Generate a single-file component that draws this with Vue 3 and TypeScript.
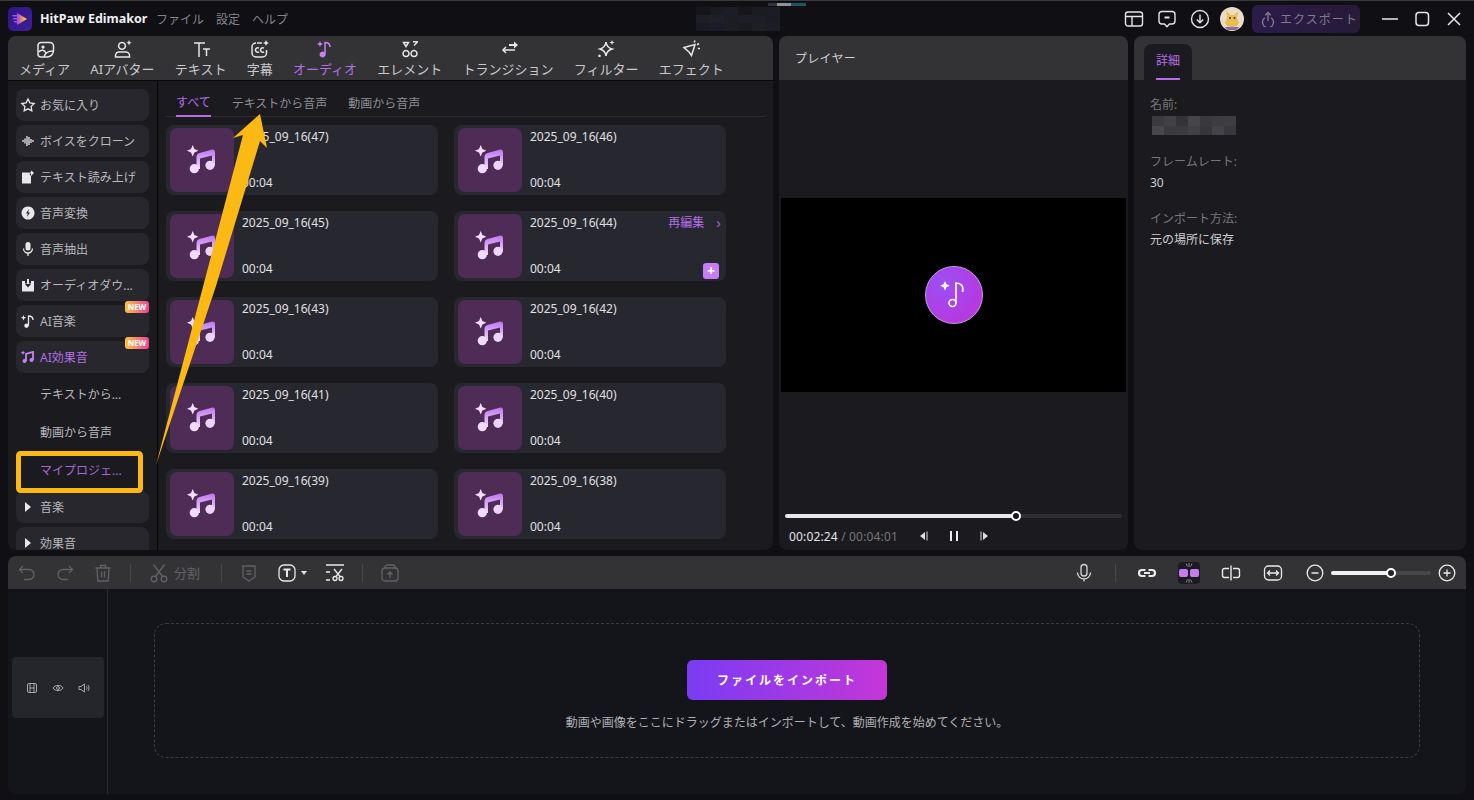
<script setup lang="ts">
interface Ico { s?: string[]; f?: string[] }
const tabs: { label: string; active?: boolean; icon: Ico }[] = [
  { label: 'メディア', icon: { s: ['M6 3.5h9a3.5 3.5 0 0 1 3.5 3.5v4.5a6.5 6.5 0 0 1-6.5 6.5H6A3 3 0 0 1 3 15V6.5a3 3 0 0 1 3-3z', 'M3.5 13c3-3 6-2 7.500 1', 'M9 18c1-4 4-6 9-6'], f: ['M8 6.500a1.600 1.600 0 1 0 .01 0z'] } },
  { label: 'AIアバター', icon: { s: ['M10 3.500a3.400 3.400 0 1 0 .01 0z', 'M3.500 18v-1.500a3.500 3.500 0 0 1 3.500-3.500h7a3.500 3.500 0 0 1 3.500 3.500V18z'], f: ['M17 1l.8 2 2 .8-2 .8-.8 2-.8-2-2-.8 2-.8z'] } },
  { label: 'テキスト', icon: { s: ['M3 4h11', 'M8 4v14', 'M12 10h7', 'M15.500 10v7'] } },
  { label: '字幕', icon: { s: ['M7 4h5M16.500 11v3a4 4 0 0 1-4 4H6a4 4 0 0 1-4-4V8a4 4 0 0 1 4-4', 'M9 9.200a2.200 2.200 0 1 0 0 3.600', 'M14 9.200a2.200 2.200 0 1 0 0 3.600'], f: ['M16 1l.9 2.100 2.100.9-2.100.9-.9 2.100-.9-2.100-2.100-.9 2.100-.9z'] } },
  { label: 'オーディオ', active: true, icon: { s: ['M10 15V3.500c3 0 5 1.500 5 4.500'], f: ['M7.600 12.500a3 3 0 1 0 .01 0z M5 2l.9 2.100L8 5l-2.100.9L5 8l-.9-2.100L2 5l2.100-.9z'] } },
  { label: 'エレメント', icon: { s: ['M6 11.500a3 3 0 1 0 .01 0z', 'M14 11.500a3 3 0 1 0 .01 0z', 'M3.500 3.500h5l-2.500 4z'], f: ['M13 2h5v1.500l-3.500 3.500-1-1L16 3.500h-3z'] } },
  { label: 'トランジション', icon: { s: ['M17 11H5', 'M8 8l-3 3 3 3'], f: ['M11 5h5V2.500L20 6l-4 3.500V7h-5z'] } },
  { label: 'フィルター', icon: { s: ['M10 3c.5 4 2.500 6 6 7-3.500 1-5.500 3-6 7-.5-4-2.500-6-6-7 3.500-1 5.500-3 6-7z'], f: ['M16 1l.7 1.800 1.800.7-1.800.7-.7 1.800-.7-1.800-1.800-.7 1.800-.7z M3.500 15.500a1.300 1.300 0 1 0 .01 0z'] } },
  { label: 'エフェクト', icon: { s: ['M3 8.500l11-3-3.500 11-2.500-3.500z', 'M14 1.500l-.8 2M18 4.500l-2 1.300M19 9.500h-2.200'] } },
]
const side: { label: string; icon?: Ico; isNew?: boolean; active?: boolean; arrow?: boolean; sub?: boolean; subActive?: boolean }[] = [
  { label: 'お気に入り', icon: { s: ['M8 2l1.900 3.900 4.300.6-3.100 3 .7 4.300L8 11.800l-3.800 2 .7-4.300-3.100-3 4.300-.6z'] } },
  { label: 'ボイスをクローン', icon: { s: ['M3 7v2M5 5.500v5M7 3v10M9 4v8M11 6v4M13 7v2'] } },
  { label: 'テキスト読み上げ', icon: { f: ['M2 3.500h7.500L11 5v9.500H2z M11.500 1.500l2.500 2.500-3 3-1.500-2z'], s: [] } },
  { label: '音声変換', icon: { f: ['M8 1.500a6.500 6.500 0 1 0 .01 0z M8.800 4L6 8.500h1.800L7 12l3-4.500H8.200z'] } },
  { label: '音声抽出', icon: { s: ['M3.500 7.500a4.500 4.500 0 0 0 9 0', 'M8 12v3'], f: ['M8 1a2.500 2.500 0 0 1 2.500 2.500V7a2.500 2.500 0 0 1-5 0V3.500A2.500 2.500 0 0 1 8 1z'] } },
  { label: 'オーディオダウ...', icon: { f: ['M2 4h3v2.500h2V2h2v4.500h2V4h3v10.500H2z M8 10.500L5 7h6z'] } },
  { label: 'AI音楽', isNew: true, icon: { s: ['M8.500 12.500V3c2.500 0 4.500 1 4.500 4'], f: ['M6.500 10.500a2.200 2.200 0 1 0 .01 0z M3.500 2l.8 1.900 1.900.8-1.900.8-.8 1.900-.8-1.900L.8 4.700l1.900-.8z'] } },
  { label: 'AI効果音', isNew: true, active: true, icon: { s: ['M6 12V5l7-2v8'], f: ['M4.500 10a2 2 0 1 0 .01 0z M11.500 9a2 2 0 1 0 .01 0z M3 1.500l.7 1.600 1.600.7-1.600.7-.7 1.600-.7-1.600-1.600-.7 1.600-.7z'] } },
  { label: 'テキストから...', sub: true },
  { label: '動画から音声', sub: true },
  { label: 'マイプロジェ...', sub: true, subActive: true },
  { label: '音楽', arrow: true },
  { label: '効果音', arrow: true },
]
const cards = [47, 46, 45, 44, 43, 42, 41, 40, 39, 38].map((n) => ({ n, name: `2025_09_16(${n})`, hover: n === 44 }))
const topTiles = ['#15151c','#1a1a22','#1d1d25','#16161c','#1b1b22','#1c1c28','#1e1e26','#1f1f27','#1c1c24','#1e1e26','#1d1d24','#1b1b23','#1a1a24','#1b1b2a','#1d1d24','#1a1a20','#1e1e26','#1d1d25']
const nameTiles = ['#3a3a3f','#404045','#333338','#45454a','#38383d','#3c3c41','#3d3d42','#47474c','#3a3a3f','#3b3b40','#404045','#36363b','#43434a','#37373c']
</script>

<template>
  <div class="app">
    <header class="titlebar">
      <div class="logo">
        <svg viewBox="0 0 24 24" width="24" height="24">
          <defs>
            <linearGradient id="lg" x1="0" y1="0" x2="1" y2="0"><stop offset="0" stop-color="#b04be8" /><stop offset=".6" stop-color="#f0a040" /><stop offset="1" stop-color="#f8dc60" /></linearGradient>
          </defs>
          <path d="M9 6l10 6-10 6z" fill="url(#lg)" />
          <path d="M4 8h7v1.500H5zM5 11h7v1.500H5.500zM5.500 14h6v1.500H6.500z" fill="#a050f0" />
        </svg>
      </div>
      <span class="brand">HitPaw Edimakor</span>
      <nav class="menu"><span>ファイル</span><span>設定</span><span>ヘルプ</span></nav>
      <div class="top-mosaic"><i v-for="(c, i) in topTiles" :key="i" :style="{ background: c }"></i></div>
      <div class="top-right">
        <svg class="ti" viewBox="0 0 20 20"><rect x="1.500" y="3" width="17" height="14" rx="2.500" /><path d="M1.500 7.500h17M8 7.500V17" /></svg>
        <svg class="ti" viewBox="0 0 20 20"><path d="M5 2.500h10a3 3 0 0 1 3 3V12a3 3 0 0 1-3 3h-2.500L10 17.800 7.500 15H5a3 3 0 0 1-3-3V5.500a3 3 0 0 1 3-3z" /><path d="M7.500 8.500h5" stroke-width="2" /></svg>
        <svg class="ti" viewBox="0 0 20 20"><circle cx="10" cy="10" r="8.500" /><path d="M10 5.500v8M6.800 10.500l3.200 3.200 3.200-3.200" /></svg>
        <svg class="avatar" viewBox="0 0 24 24"><circle cx="12" cy="12" r="12" fill="#eadcc8" /><path d="M6 3l4 5h4l4-4-1 7 2 5-3 4H8l-3-4 2-5z" fill="#e8bf50" /><circle cx="10" cy="11" r="1" fill="#4a3520" /><circle cx="14.500" cy="11" r="1" fill="#4a3520" /><path d="M5 20h14l-2 3H7z" fill="#8a6fa8" /></svg>
        <button class="export">
          <svg viewBox="0 0 16 16" width="16" height="16"><path d="M8 10V1.500M5.200 4.300L8 1.500l2.800 2.800M4.800 6.800a5.500 5.500 0 1 0 6.400 0" fill="none" stroke="#7f7b8a" stroke-width="1.400" /></svg>
          <span>エクスポート</span>
        </button>
        <div class="winctl">
          <svg viewBox="0 0 16 16"><path d="M0 8h16" /></svg>
          <svg viewBox="0 0 16 16"><rect x="2" y="1.500" width="12.500" height="13" rx="3" /></svg>
          <svg viewBox="0 0 16 16"><path d="M2 2l12 12M14 2L2 14" /></svg>
        </div>
      </div>
    </header>

    <div class="upper">
      <section class="panel media">
        <div class="tabs">
          <div v-for="t in tabs" :key="t.label" class="tab" :class="{ on: t.active }">
            <svg viewBox="0 0 20 20" width="20" height="20">
              <path v-for="(d, i) in t.icon.s" :key="i" :d="d" class="st" />
              <path v-for="(d, i) in t.icon.f" :key="'f' + i" :d="d" class="fl" />
            </svg>
            <span>{{ t.label }}</span>
          </div>
        </div>
        <div class="media-body">
          <aside class="side">
            <div v-for="s in side" :key="s.label" class="side-item" :class="{ sub: s.sub, subon: s.subActive, on: s.active }">
              <svg v-if="s.icon" viewBox="0 0 16 16" width="16" height="16">
                <path v-for="(d, i) in s.icon.s" :key="i" :d="d" class="st" />
                <path v-for="(d, i) in s.icon.f" :key="'f' + i" :d="d" class="fl" fill-rule="evenodd" />
              </svg>
              <svg v-if="s.arrow" viewBox="0 0 16 16" width="16" height="16"><path d="M5 3l6 5-6 5z" class="fl" /></svg>
              <span>{{ s.label }}</span>
              <em v-if="s.isNew" class="new">NEW</em>
            </div>
          </aside>
          <div class="content">
            <div class="subtabs"><span class="on">すべて</span><span>テキストから音声</span><span>動画から音声</span></div>
            <div class="grid">
              <article v-for="c in cards" :key="c.n" class="card">
                <div class="thumb">
                  <svg viewBox="0 0 32 32" width="32" height="32">
                    <defs><linearGradient :id="'n' + c.n" x1="0" y1="0" x2="0" y2="1"><stop offset="0" stop-color="#bf76ee" /><stop offset="1" stop-color="#f0dcff" /></linearGradient></defs>
                    <path d="M10.500 25V13Q10.500 10 13.500 9L25.500 5.700Q29 5 29 8.500V21.500H26V11.500L14 14.500V25z" :fill="`url(#n${c.n})`" />
                    <circle cx="8.300" cy="24.700" r="4.600" fill="#f0dcff" />
                    <circle cx="24" cy="21.300" r="4.600" fill="#edd4fc" />
                    <path d="M6.700 1l1.700 4 4 1.700-4 1.700-1.700 4-1.700-4-4-1.700 4-1.700z" fill="#f3dcff" />
                  </svg>
                </div>
                <div class="info">
                  <div class="row"><span>{{ c.name }}</span><span v-if="c.hover" class="reedit">再編集<b>›</b></span></div>
                  <div class="row"><span>00:04</span><span v-if="c.hover" class="plus">+</span></div>
                </div>
              </article>
            </div>
          </div>
        </div>
      </section>

      <section class="panel player">
        <div class="head"><span class="head-title">プレイヤー</span></div>
        <div class="stage">
          <div class="video">
            <div class="disc">
              <svg viewBox="0 0 40 40" width="40" height="40">
                <path d="M11 6l1.500 3.300 3.300 1.500-3.300 1.500L11 15.600l-1.500-3.300-3.300-1.500 3.300-1.500z" fill="#fff" />
                <path d="M22 28V8c5 0 8 3 6.500 9" fill="none" stroke="#fff" stroke-width="1.600" />
                <circle cx="18.500" cy="28" r="3.500" fill="none" stroke="#fff" stroke-width="1.600" />
              </svg>
            </div>
          </div>
        </div>
        <div class="progress"><div class="fill"><i></i></div></div>
        <div class="controls">
          <span class="time"><b>00:02:24</b> / 00:04:01</span>
          <div class="pbtns">
            <svg viewBox="0 0 12 12" width="12" height="12"><path d="M7 2v8L2 6z" fill="#ddd" /><path d="M9 1.500v9" stroke="#ddd" stroke-width="1" /></svg>
            <svg viewBox="0 0 12 12" width="12" height="12"><path d="M3 1v10M9 1v10" stroke="#eee" stroke-width="2" /></svg>
            <svg viewBox="0 0 12 12" width="12" height="12"><path d="M5 2v8l5-4z" fill="#ddd" /><path d="M3 1.500v9" stroke="#ddd" stroke-width="1" /></svg>
          </div>
        </div>
      </section>

      <section class="panel detail">
        <div class="head detail-head"><div class="dtab"><span>詳細</span></div></div>
        <dl class="dl">
          <dt>名前:</dt>
          <dd class="mos"><i v-for="(c, i) in nameTiles" :key="i" :style="{ background: c }"></i></dd>
          <dt>フレームレート:</dt>
          <dd>30</dd>
          <dt>インポート方法:</dt>
          <dd>元の場所に保存</dd>
        </dl>
      </section>
    </div>

    <section class="panel lower">
      <div class="toolbar">
        <div class="tools">
          <svg class="tl dim" viewBox="0 0 20 20"><path d="M6 3L2.500 6.500 6 10" /><path d="M2.500 6.500H12a5 5 0 0 1 0 10H7" /></svg>
          <svg class="tl dim g18" viewBox="0 0 20 20"><path d="M14 3l3.500 3.500L14 10" /><path d="M17.500 6.500H8a5 5 0 0 0 0 10h5" /></svg>
          <svg class="tl dim g18" viewBox="0 0 20 20"><path d="M2.500 5h15M7.500 5V2.500h5V5M4 5l.8 13h10.400L16 5M8.500 8.500v6M11.500 8.500v6" /></svg>
          <i class="sep s1"></i>
          <svg class="tl dim g18" viewBox="0 0 20 20"><circle cx="5" cy="16" r="2.800" /><circle cx="15" cy="16" r="2.800" /><path d="M6.500 13.500L15.500 1.500M13.500 13.500L4.500 1.500" /></svg>
          <span class="split">分割</span>
          <i class="sep s2"></i>
          <svg class="tl dim nar" viewBox="0 0 20 20"><path d="M4 3h12v11l-6 4-6-4z" /><path d="M7.500 8h5M7.500 11h5" /></svg>
          <svg class="tl wh t-t" viewBox="0 0 20 20"><rect x="2" y="2" width="16" height="16" rx="5" /><path d="M6.500 6.500h7M10 6.500V14" stroke-width="2" /></svg>
          <svg class="caret" viewBox="0 0 8 8" width="8" height="8"><path d="M1 2h6L4 6z" fill="#ddd" /></svg>
          <svg class="tl wh t-s" viewBox="0 0 20 20"><path d="M1 2h18M1 9h4M1 17h4" /><circle cx="10" cy="15.500" r="2" /><circle cx="16" cy="15.500" r="2" /><path d="M11 13.500L17 6M15 13.500L9 6" /></svg>
          <i class="sep s3"></i>
          <svg class="tl dim t-u" viewBox="0 0 20 20"><rect x="2" y="5" width="16" height="13" rx="3" /><path d="M5 5V4a2 2 0 0 1 2-2h6a2 2 0 0 1 2 2v1M10 15V9M7.500 11.500L10 9l2.500 2.500" /></svg>
        </div>
        <div class="tools right">
          <svg class="tl wh mic" viewBox="0 0 20 20"><path d="M10 1.500a3 3 0 0 1 3 3V10a3 3 0 0 1-6 0V4.500a3 3 0 0 1 3-3z" /><path d="M3.500 9.500a6.500 6.500 0 0 0 13 0M10 16v2.500" /></svg>
          <i class="sep s4"></i>
          <svg class="tl wh s5" viewBox="0 0 20 20"><path d="M8.500 7H5a3 3 0 0 0 0 6h3.500M11.500 7H15a3 3 0 0 1 0 6h-3.500M7 10h6" stroke-width="2.200" /></svg>
          <div class="activebox">
            <svg viewBox="0 0 22 22" width="22" height="22"><rect x="1" y="7" width="9" height="8" rx="2" fill="#c77cf2" /><rect x="12" y="7" width="9" height="8" rx="2" fill="#c77cf2" /><path d="M8 1.500l1.500 3M14 1.500l-1.500 3M8 20.500l1.500-3M14 20.500l-1.500-3M11 1v4M11 17v4" stroke="#8a7a98" stroke-width="1" fill="none" /></svg>
          </div>
          <svg class="tl wh s6" viewBox="0 0 20 20"><path d="M8 5.500H3.500a2 2 0 0 0-2 2v5a2 2 0 0 0 2 2H8M12 5.500h4.500a2 2 0 0 1 2 2v5a2 2 0 0 1-2 2H12M10 2.500v15" stroke-width="1.400" /></svg>
          <svg class="tl wh s7" viewBox="0 0 20 20"><rect x="1.500" y="3" width="17" height="14" rx="4" /><path d="M4.500 10h11M7 7.500L4.500 10 7 12.500M13 7.500l2.500 2.500-2.500 2.500" /></svg>
          <svg class="tl wh s8" viewBox="0 0 20 20"><circle cx="10" cy="10" r="7.800" /><path d="M6.500 10h7" /></svg>
          <div class="zoom"><div class="zfill"><i></i></div></div>
          <svg class="tl wh s9" viewBox="0 0 20 20"><circle cx="10" cy="10" r="7.800" /><path d="M6.500 10h7M10 6.500v7" /></svg>
        </div>
      </div>
      <div class="timeline">
        <div class="track-col">
          <div class="track-head">
            <svg viewBox="0 0 12 12" width="12" height="12"><rect x="1.500" y="1.500" width="9" height="9" rx="1.500" /><path d="M4 1.500v9M8 1.500v9M4 6h4" /></svg>
            <svg viewBox="0 0 12 12" width="12" height="12"><path d="M1 6c2-3.500 8-3.500 10 0-2 3.500-8 3.500-10 0z" /><circle cx="6" cy="6" r="1.500" /></svg>
            <svg viewBox="0 0 12 12" width="12" height="12"><path d="M1 4.500v3h2L6.500 10V2L3 4.500zM8.500 4.500c.7 1 .7 2 0 3M10 3c1.300 2 1.300 4 0 6" /></svg>
          </div>
        </div>
        <div class="drop">
          <button class="import">ファイルをインポート</button>
          <p>動画や画像をここにドラッグまたはインポートして、動画作成を始めてください。</p>
        </div>
      </div>
    </section>

    <i class="strip"></i>
    <svg class="overlay" viewBox="0 0 1474 800" width="1474" height="800">
      <rect x="18.500" y="453.500" width="122" height="37" rx="2" fill="none" stroke="#fdb913" stroke-width="5" />
      <path d="M260 114L267 148L260 141L216 286L156 465L243 135L233 138z" fill="#fdb913" />
    </svg>
  </div>
</template>

<style>
html, body { margin: 0; background: #0f0f14; }
</style>

<style scoped>
* { box-sizing: border-box; }
.app {
  position: relative; width: 1474px; height: 800px; overflow: hidden; background: #0f0f14;
  border-top: 1px solid #3a3a3e;
  font-family: "Noto Sans", "Noto Sans CJK JP", sans-serif; font-size: 12px; color: #cfcfd2;
}
.strip { position: absolute; left: 768px; top: 2px; width: 38px; height: 3px; background: linear-gradient(90deg, #33333a 0 25%, #8e9297 25% 60%, #1f5560 60%); }
.titlebar { height: 35px; display: flex; align-items: center; padding-left: 8px; }
.logo { width: 24px; height: 24px; border-radius: 5px; background: linear-gradient(135deg, #2d1680, #3f1f9c); display: flex; }
.brand { margin-left: 8px; font-size: 12.500px; font-weight: 700; color: #f0f0f2; white-space: nowrap; width: 108px; }
.menu { display: flex; gap: 12px; color: #85858b; margin-left: 8px; width: 132px; }
.top-mosaic { margin-left: 408px; width: 84px; height: 24px; display: grid; grid-template-columns: repeat(6, 1fr); }
.top-right { margin-left: auto; display: flex; align-items: center; }
.ti { width: 20px; height: 20px; fill: none; stroke: #e4e4e6; stroke-width: 1.400; margin-right: 13px; }
.avatar { width: 24px; height: 24px; margin-left: -3px; }
.export {
  margin-left: 8px; width: 108px; height: 28px; border: 0; border-radius: 6px; background: linear-gradient(90deg, #2b1b4a, #281a38);
  color: #7f7b8a; font: inherit; display: flex; align-items: center; gap: 3px; padding: 0 0 0 8px;
}
.export span { letter-spacing: 1px; margin-left: 1px; white-space: nowrap; }
.winctl { display: flex; gap: 16px; margin: 0 12px 0 22px; }
.winctl svg { width: 16px; height: 16px; fill: none; stroke: #e8e8ea; stroke-width: 1.500; }

.upper { display: flex; gap: 6px; padding: 0 8px; height: 514px; }
.panel { background: #1a1a1f; border-radius: 8px; overflow: hidden; }
.media { width: 765px; display: flex; flex-direction: column; }
.tabs { height: 45px; background: #333336; border-bottom: 1px solid #08080a; display: flex; gap: 20.250px; padding-left: 11px; flex: none; }
.tab { display: flex; flex-direction: column; align-items: center; color: #c9c9cb; font-size: 13px; line-height: 18px; padding-top: 3px; white-space: nowrap; }
.tab svg { height: 20px; margin-bottom: 1px; }
.tab .st { fill: none; stroke: #e6e6e8; stroke-width: 1.500; }
.tab .fl { fill: #e6e6e8; }
.tab.on { color: #b56ee8; }
.tab.on .st { stroke: #c783f2; }
.tab.on .fl { fill: #c783f2; }
.media-body { flex: 1; display: flex; min-height: 0; }
.side { width: 150px; flex: none; border-right: 1px solid #050507; padding: 8px 8px 0; display: flex; flex-direction: column; gap: 4px; overflow: hidden; }
.side-item { position: relative; flex: none; width: 133px; height: 32px; border-radius: 8px; background: #27272d; display: flex; align-items: center; padding-left: 4px; gap: 4px; color: #b9b9bc; white-space: nowrap; }
.side-item .st { fill: none; stroke: #e8e8ea; stroke-width: 1.300; }
.side-item .fl { fill: #e8e8ea; }
.side-item.on { color: #b56ee8; }
.side-item.on .st { stroke: #c783f2; stroke-width: 1.800; }
.side-item.on .fl { fill: #c783f2; }
.sub { height: 34px; background: none; padding-left: 24px; }
.subon { color: #a56ad8; }
.new {
  position: absolute; right: 0; top: -4px; width: 24px; height: 12px; border-radius: 3px; background: linear-gradient(90deg, #f8c83c, #f0409c);
  font: 700 8px/12px "Noto Sans", sans-serif; color: #fff; text-align: center;
}
.content { flex: 1; padding: 0 8px; min-width: 0; }
.subtabs { height: 36px; display: flex; gap: 21px; padding-left: 10px; border-bottom: 1px solid #2c2c31; color: #8e8e93; }
.subtabs span { height: 36px; line-height: 34px; padding-top: 6px; white-space: nowrap; }
.subtabs .on { color: #b56ee8; border-bottom: 2px solid #b56ee8; line-height: 32px; }
.grid { display: grid; grid-template-columns: 272px 272px; column-gap: 16px; row-gap: 16px; padding-top: 8px; }
.card { height: 70px; background: #27272f; border-radius: 8px; padding: 3px 4px; display: flex; gap: 8px; }
.thumb { width: 64px; height: 64px; flex: none; background: #4e2c56; border-radius: 7px; display: flex; align-items: center; justify-content: center; }
.info { flex: 1; display: flex; flex-direction: column; justify-content: space-between; color: #e0e0e2; line-height: 17px; padding: 0 4px 1px 0; }
.row { display: flex; justify-content: space-between; align-items: center; height: 17px; }
.reedit { color: #b56ee8; display: flex; gap: 12px; margin-right: -3px; }
.reedit b { font-weight: 400; font-size: 15px; color: #a060d0; }
.plus { width: 16px; height: 16px; border-radius: 3px; background: #c87cf6; color: #fff; font-weight: 700; line-height: 16px; text-align: center; margin: 2px -1px -2px 0; font-size: 14px; }

.player { width: 349px; display: flex; flex-direction: column; }
.head { height: 44px; flex: none; background: #333336; }
.head-title { display: block; padding: 13px 0 0 16px; color: #d0d0d2; letter-spacing: .3px; line-height: 20px; }
.stage { flex: 1; display: flex; align-items: center; padding: 0 2px; }
.video { width: 345px; height: 194px; margin-top: -4px; background: #000; display: flex; align-items: center; justify-content: center; }
.disc { width: 58px; height: 58px; border-radius: 50%; background: radial-gradient(circle at 30% 30%, #9a50f5, #b53ae0 70%); border: 1px solid #c99af0; display: flex; align-items: center; justify-content: center; }
.progress { height: 4px; margin: 0 6px; border-radius: 2px; background: #2e2e33; flex: none; }
.fill { position: relative; width: 232px; height: 4px; background: #e8e8ea; border-radius: 2px; }
.fill i { position: absolute; right: -4px; top: -3px; width: 10px; height: 10px; border-radius: 50%; background: #1a1a1f; border: 2px solid #fff; }
.controls { height: 36px; flex: none; display: flex; align-items: center; padding: 0 0 0 10px; margin-bottom: -4px; color: #77777c; }
.time { width: 129px; white-space: nowrap; letter-spacing: .16px; }
.time b { font-weight: 400; color: #e4e4e6; }
.pbtns { display: flex; gap: 18px; }

.detail { flex: 1; }
.detail-head { padding: 8px 0 0 10px; }
.dtab { width: 48px; height: 36px; background: #1a1a1f; border-radius: 8px 8px 0 0; display: flex; justify-content: center; color: #b56ee8; }
.dtab span { width: 24px; height: 36px; line-height: 34px; border-bottom: 2px solid #b56ee8; }
.dl { margin: 0; padding: 15px 0 0 16px; line-height: 20px; }
dt { color: #77777c; }
dd { height: 20px; color: #cfcfd2; margin: 1px 0 16px; }
dd.mos { width: 84px; height: 19px; margin: 1px 0 17px 2px; display: grid; grid-template-columns: repeat(7, 1fr); }

.lower { position: absolute; left: 8px; top: 555px; width: 1458px; height: 238px; background: #14151a; display: flex; flex-direction: column; }
.toolbar { height: 33px; flex: none; background: #333336; display: flex; justify-content: space-between; align-items: center; padding: 0 10px 0 9px; }
.tools { display: flex; align-items: center; }
.tl { width: 20px; height: 20px; fill: none; stroke-width: 1.300; flex: none; }
.dim { stroke: #626266; }
.wh { stroke: #eaeaec; }
.mic { stroke: #d8d8da; }
.g18 { margin-left: 18px; }
.sep { width: 1px; height: 18px; background: #47474b; flex: none; }
.s1 { margin-left: 17px; }
.split { color: #626266; font-size: 13px; margin-left: 5px; white-space: nowrap; }
.s2 { margin-left: 21px; }
.nar { margin-left: 17px; }
.t-t { margin-left: 18px; }
.caret { margin-left: 3px; }
.t-s { margin-left: 17px; }
.s3 { margin-left: 17px; }
.t-u { margin-left: 17px; }
.right { margin-right: -1px; }
.s4 { margin-left: 21px; }
.s5 { margin-left: 21px; }
.activebox { width: 22px; height: 22px; border-radius: 4px; background: #1c1c20; margin-left: 21px; }
.s6 { margin-left: 21px; }
.s7 { margin-left: 22px; }
.s8 { margin-left: 22px; }
.zoom { width: 100px; height: 4px; border-radius: 2px; background: #47474b; margin-left: 6px; }
.zfill { position: relative; width: 60px; height: 4px; border-radius: 2px; background: #f0f0f2; }
.zfill i { position: absolute; right: -5px; top: -3px; width: 10px; height: 10px; border-radius: 50%; background: #222; border: 2px solid #fff; }
.s9 { margin-left: 6px; }
.timeline { flex: 1; display: flex; min-height: 0; }
.track-col { width: 100px; flex: none; border-right: 1px solid #2a2a2f; padding: 68px 0 0 4px; }
.track-head { width: 92px; height: 61px; border-radius: 4px; background: #25262b; display: flex; align-items: center; justify-content: center; gap: 14px; }
.track-head svg { fill: none; stroke: #a8a8ac; stroke-width: 1; }
.drop {
  width: 1266px; height: 135px; margin: 34px 0 0 46px; border: 1px dashed #3c3d42; border-radius: 12px;
  display: flex; flex-direction: column; align-items: center; padding-top: 36px;
}
.import { width: 200px; height: 40px; border: 0; border-radius: 6px; background: linear-gradient(90deg, #7a3cf2, #c436d8); color: #fff; font: 700 12px "Noto Sans", "Noto Sans CJK JP", sans-serif; letter-spacing: 2px; padding: 0; }
.drop p { margin: 14px 0 0; color: #b0b0b4; font-size: 12px; line-height: 18px; white-space: nowrap; }
.overlay { position: absolute; left: 0; top: -1px; pointer-events: none; }
</style>
